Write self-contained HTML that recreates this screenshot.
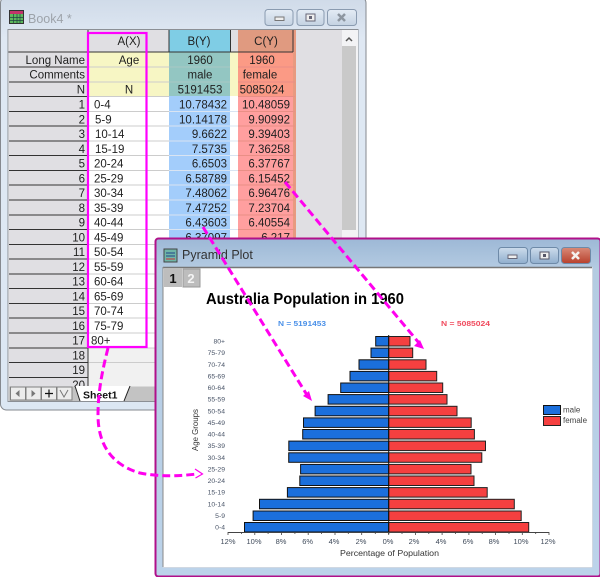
<!DOCTYPE html>
<html><head><meta charset="utf-8">
<style>
html,body{margin:0;padding:0;background:#fff;width:600px;height:577px;overflow:hidden}
svg{display:block;font-family:"Liberation Sans",sans-serif;filter:blur(.35px)}
.t{font-size:11.5px;fill:#1f1f1f}
.r{text-anchor:end}
.m{text-anchor:middle}
.a{font-size:6.8px;fill:#4a5568;text-anchor:end}
.x{font-size:7.5px;fill:#3f4a5a;text-anchor:middle}
.mb{fill:#1b6fdc;stroke:#111;stroke-width:1}
.fb{fill:#f54040;stroke:#222;stroke-width:1}
.rl{stroke:#333;stroke-width:1}
.dl{stroke:#ccc;stroke-width:1}
</style></head><body>
<svg width="600" height="577" viewBox="0 0 600 577" xmlns="http://www.w3.org/2000/svg">
<defs>
<linearGradient id="c1" x1="0" y1="0" x2="0" y2="1"><stop offset="0" stop-color="#cfdae8"/><stop offset=".1" stop-color="#dfe8f3"/><stop offset="1" stop-color="#dce7f3"/></linearGradient>
<linearGradient id="c2" x1="0" y1="0" x2="0" y2="1"><stop offset="0" stop-color="#9db8d6"/><stop offset=".09" stop-color="#b4cbe2"/><stop offset="1" stop-color="#bcd3ea"/></linearGradient>
<linearGradient id="b1" x1="0" y1="0" x2="0" y2="1"><stop offset="0" stop-color="#e4ecf5"/><stop offset="1" stop-color="#c4d2e2"/></linearGradient>
<linearGradient id="b2" x1="0" y1="0" x2="0" y2="1"><stop offset="0" stop-color="#cddcec"/><stop offset="1" stop-color="#90aecd"/></linearGradient>
<linearGradient id="b3" x1="0" y1="0" x2="0" y2="1"><stop offset="0" stop-color="#d98a78"/><stop offset="1" stop-color="#b8402c"/></linearGradient>
</defs>

<!-- Book window -->
<rect x=".5" y="-3" width="365.500" height="413" rx="6" fill="url(#c1)" stroke="#85898f"/>
<rect x="8" y="29.500" width="350" height="372" fill="#fff" stroke="#8b8f95"/>
<g fill="#e0dfe3"><rect x="9" y="30" width="79" height="357"/><rect x="88" y="30" width="81" height="22"/><rect x="230" y="30" width="8" height="22"/><rect x="295" y="30" width="47" height="357"/></g>
<rect x="88" y="52" width="81" height="44" fill="#f7f6c4"/>
<rect x="230" y="52" width="8" height="44" fill="#f7f6c4"/>
<rect x="169" y="30" width="61" height="22" fill="#7fcde5"/>
<rect x="169" y="52" width="61" height="44" fill="#93c6c2"/>
<rect x="169" y="96" width="61" height="146" fill="#a3cdfb"/>
<rect x="238" y="30" width="55" height="22" fill="#e09a80"/>
<rect x="238" y="52" width="55" height="44" fill="#fb9a85"/>
<rect x="238" y="96" width="55" height="146" fill="#ff9f9f"/>
<rect x="293" y="30" width="3" height="212" fill="#e89a80"/>
<rect x="88" y="348" width="70" height="39" fill="#f1f1f1"/>
<!-- grid lines -->
<g class="dl">
<path d="M88 67H169M88 82H169M88 96.500H169M88 111.500H169M88 126H169M88 141H169M88 155.500H169M88 170.500H169M88 185H169M88 200H169M88 215H169M88 229.500H169M88 244.500H160M88 259H160M88 274H160M88 288.500H160M88 303.500H160M88 318H160M88 333H160M88 348H160M88 362.500H160"/>
<path stroke="#d9e4f2" d="M169 111.500H238M169 126H238M169 141H238M169 155.500H238M169 170.500H238M169 185H238M169 200H238M169 215H238M169 229.500H238"/>
<path stroke="#a9c8c4" d="M169 67H230M169 82H230"/>
<path stroke="#e98f86" d="M238 67H295M238 82H295M238 96.500H295M238 111.500H295M238 126H295M238 141H295M238 155.500H295M238 170.500H295M238 185H295M238 200H295M238 215H295M238 229.500H295"/>
</g>
<path d="M88 30V386M169 30V52M230.500 30V52M293 30V52M8.500 52H293" stroke="#333" fill="none"/>
<g class="rl"><path d="M9 67H88M9 82H88M9 96.500H88M9 111.500H88M9 126H88M9 141H88M9 155.500H88M9 170.500H88M9 185H88M9 200H88M9 215H88M9 229.500H88M9 244.500H88M9 259H88M9 274H88M9 288.500H88M9 303.500H88M9 318H88M9 333H88M9 348H88M9 362.500H88M9 377.500H88" /></g>

<!-- Sheet texts -->
<g class="t m"><text x="129" y="45">A(X)</text><text x="129" y="64">Age</text><text x="129" y="93.500">N</text>
<text x="199" y="45">B(Y)</text><text x="266" y="45">C(Y)</text>
<text x="200" y="64">1960</text><text x="262" y="64">1960</text>
<text x="200" y="78.500">male</text><text x="260" y="78.500">female</text>
<text x="200" y="93.500">5191453</text><text x="262" y="93.500">5085024</text></g>
<g class="t r">
<text x="85" y="64">Long Name</text><text x="85" y="78.500">Comments</text><text x="85" y="93.500">N</text>
<text x="85" y="108.500">1</text><text x="85" y="123.300">2</text><text x="85" y="138">3</text><text x="85" y="152.800">4</text><text x="85" y="167.500">5</text><text x="85" y="182.300">6</text><text x="85" y="197">7</text><text x="85" y="211.800">8</text><text x="85" y="226.600">9</text><text x="85" y="241.300">10</text><text x="85" y="256.100">11</text><text x="85" y="270.900">12</text><text x="85" y="285.600">13</text><text x="85" y="300.400">14</text><text x="85" y="315.100">15</text><text x="85" y="329.900">16</text><text x="85" y="344.700">17</text><text x="85" y="359.400">18</text><text x="85" y="374.200">19</text><text x="85" y="389">20</text>
<text x="227" y="108.500">10.78432</text><text x="227" y="123.300">10.14178</text><text x="227" y="138">9.6622</text><text x="227" y="152.800">7.5735</text><text x="227" y="167.500">6.6503</text><text x="227" y="182.300">6.58789</text><text x="227" y="197">7.48062</text><text x="227" y="211.800">7.47252</text><text x="227" y="226.600">6.43603</text><text x="227" y="241.300">6.37097</text>
<text x="290" y="108.500">10.48059</text><text x="290" y="123.300">9.90992</text><text x="290" y="138">9.39403</text><text x="290" y="152.800">7.36258</text><text x="290" y="167.500">6.37767</text><text x="290" y="182.300">6.15452</text><text x="290" y="197">6.96476</text><text x="290" y="211.800">7.23704</text><text x="290" y="226.600">6.40554</text><text x="290" y="241.300">6.217</text>
</g>
<g class="t">
<text x="94" y="108.500">0-4</text><text x="95" y="123.300">5-9</text><text x="95" y="138">10-14</text><text x="95" y="152.800">15-19</text><text x="94" y="167.500">20-24</text><text x="94" y="182.300">25-29</text><text x="94" y="197">30-34</text><text x="94" y="211.800">35-39</text><text x="94" y="226.600">40-44</text><text x="94" y="241.300">45-49</text><text x="94" y="256.100">50-54</text><text x="94" y="270.900">55-59</text><text x="94" y="285.600">60-64</text><text x="94" y="300.400">65-69</text><text x="94" y="315.100">70-74</text><text x="94" y="329.900">75-79</text><text x="91" y="344.700">80+</text>
</g>

<!-- Scrollbar -->
<rect x="342" y="30" width="16" height="215" fill="#f3f3f5"/>
<rect x="342" y="46" width="14" height="184" fill="#c9c9c9"/>
<path d="M346 41l3-3 3 3" fill="none" stroke="#555" stroke-width="1.500"/>

<!-- Tab bar -->
<rect x="9" y="386.500" width="149" height="14.500" fill="#c3c3c3"/>
<g fill="#ececec" stroke="#808080"><rect x="10.500" y="387" width="15" height="13"/><rect x="26" y="387" width="15" height="13"/><rect x="41.500" y="387" width="15" height="13"/><rect x="57" y="387" width="15" height="13"/></g>
<path d="M19.500 390l-4 3.500 4 3.500zM31.500 390l4 3.500-4 3.500z" fill="#777"/>
<path d="M45 393.500h8M49 389.500v8" stroke="#111" stroke-width="1.200"/>
<path d="M60 390l4 7 4-7" stroke="#777" fill="none"/>
<path d="M75 386l5 15h44l6-15z" fill="#fff"/>
<path d="M75 386l5 15M130 386l-6 15" stroke="#222" fill="none"/>
<text x="83" y="398.500" font-size="10.500" font-weight="bold" fill="#111">Sheet1</text>

<!-- Book title bar -->
<rect x="9.500" y="10.500" width="14" height="13" fill="#5cb85c" stroke="#333"/>
<rect x="10" y="11" width="13" height="3" fill="#c2336a"/>
<path d="M10 17.500H23M10 20.500H23M13.500 14V23M17 14V23M20 14V23" stroke="#244" stroke-width=".7"/>
<text x="28" y="23" font-size="12.500" fill="#9da3aa">Book4 *</text>
<g stroke="#8a9bb0"><rect x="265" y="9.500" width="28" height="16" rx="3" fill="url(#b1)"/><rect x="297" y="9.500" width="27" height="16" rx="3" fill="url(#b1)"/><rect x="327.500" y="9.500" width="29" height="16" rx="3" fill="url(#b1)"/></g>
<rect x="275" y="17" width="9" height="3.500" fill="#eee" stroke="#777"/>
<rect x="306" y="14" width="9" height="7" fill="#eee" stroke="#667"/><rect x="309" y="16" width="3" height="3" fill="#667"/>
<path d="M338 14l7 7M345 14l-7 7" stroke="#8d96a0" stroke-width="2.500"/>

<!-- Plot window -->
<rect x="155.500" y="238.500" width="445" height="338" rx="3" fill="url(#c2)" stroke="#b0108a" stroke-width="2"/>
<rect x="163" y="267" width="430" height="300" fill="#fff"/>
<path d="M163 267.500H592" stroke="#777" stroke-width="1.500"/>
<path d="M163 267V567" stroke="#888" stroke-width="1"/>
<path d="M163 567.500H592M592.500 267V567" stroke="#d0d8e2" stroke-width="1"/>
<rect x="164" y="249" width="13" height="13" fill="#6fb5a8" stroke="#444"/>
<path d="M166 253h9M166 256h9" stroke="#224488"/><path d="M166 259h9" stroke="#c33"/>
<text x="182" y="259" font-size="12.500" fill="#333">Pyramid Plot</text>
<g stroke="#6e8aa8"><rect x="498.500" y="247.500" width="29" height="16" rx="3" fill="url(#b2)"/><rect x="530.500" y="247.500" width="28" height="16" rx="3" fill="url(#b2)"/><rect x="561.500" y="247.500" width="29" height="16" rx="3" fill="url(#b3)"/></g>
<rect x="508" y="255" width="9" height="3.500" fill="#eee" stroke="#667"/>
<rect x="540" y="252" width="9" height="7" fill="#eee" stroke="#556"/><rect x="543" y="254" width="3" height="3" fill="#556"/>
<path d="M572 252l7 7M579 252l-7 7" stroke="#f4f0ee" stroke-width="2.500"/>

<!-- Page tabs -->
<rect x="164" y="268" width="18" height="19" fill="#bdbdbd"/>
<rect x="183" y="269" width="17" height="18" fill="#bdbdbd" stroke="#999"/>
<text x="173" y="283" font-size="13" font-weight="bold" fill="#111" text-anchor="middle">1</text>
<text x="191" y="283" font-size="13" font-weight="bold" fill="#f4f4f4" text-anchor="middle">2</text>

<!-- Chart titles -->
<text x="206" y="304" font-size="16" font-weight="bold" fill="#000" textLength="198" lengthAdjust="spacingAndGlyphs">Australia Population in 1960</text>
<text x="278" y="326" font-size="7.500" font-weight="bold" fill="#4a90e8" textLength="48" lengthAdjust="spacingAndGlyphs">N = 5191453</text>
<text x="441" y="326" font-size="7.500" font-weight="bold" fill="#f04b5e" textLength="49" lengthAdjust="spacingAndGlyphs">N = 5085024</text>

<!-- Male bars -->
<g class="mb">
<rect x="244.500" y="522.500" width="144.200" height="9.500"/><rect x="253.100" y="511" width="135.600" height="9.500"/><rect x="259.500" y="499.300" width="129.200" height="9.500"/><rect x="287.400" y="487.600" width="101.300" height="9.500"/><rect x="299.800" y="476" width="88.900" height="9.500"/><rect x="300.600" y="464.400" width="88.100" height="9.500"/><rect x="288.700" y="452.800" width="100" height="9.500"/><rect x="288.800" y="441.100" width="99.900" height="9.500"/><rect x="302.700" y="429.500" width="86" height="9.500"/><rect x="303.500" y="417.900" width="85.200" height="9.500"/><rect x="315.100" y="406.300" width="73.600" height="9.500"/><rect x="328.100" y="394.600" width="60.600" height="9.500"/><rect x="340.700" y="383" width="48" height="9.500"/><rect x="350" y="371.400" width="38.700" height="9.500"/><rect x="359" y="359.800" width="29.700" height="9.500"/><rect x="371" y="348.100" width="17.700" height="9.500"/><rect x="375.700" y="336.500" width="13" height="9.500"/>
</g>
<!-- Female bars -->
<g class="fb">
<rect x="388.700" y="522.500" width="140" height="9.500"/><rect x="388.700" y="511" width="132.500" height="9.500"/><rect x="388.700" y="499.300" width="125.600" height="9.500"/><rect x="388.700" y="487.600" width="98.500" height="9.500"/><rect x="388.700" y="476" width="85.300" height="9.500"/><rect x="388.700" y="464.400" width="82.300" height="9.500"/><rect x="388.700" y="452.800" width="93.100" height="9.500"/><rect x="388.700" y="441.100" width="96.800" height="9.500"/><rect x="388.700" y="429.500" width="85.700" height="9.500"/><rect x="388.700" y="417.900" width="82.500" height="9.500"/><rect x="388.700" y="406.300" width="68.300" height="9.500"/><rect x="388.700" y="394.600" width="58.300" height="9.500"/><rect x="388.700" y="383" width="54" height="9.500"/><rect x="388.700" y="371.400" width="48" height="9.500"/><rect x="388.700" y="359.800" width="37.300" height="9.500"/><rect x="388.700" y="348.100" width="24" height="9.500"/><rect x="388.700" y="336.500" width="21.300" height="9.500"/>
</g>
<path d="M388.700 335V534" stroke="#111" stroke-width="1"/>
<path d="M228 532.500H549" stroke="#444" stroke-width="1"/>
<path d="M228 532v3M241.400 532v2M254.800 532v3M268.100 532v2M281.500 532v3M294.900 532v2M308.200 532v3M321.600 532v2M335 532v3M348.300 532v2M361.700 532v3M375.300 532v2M388.700 532v3M402 532v2M415.400 532v3M428.800 532v2M442.100 532v3M455.500 532v2M468.900 532v3M482.200 532v2M495.600 532v3M509 532v2M522.300 532v3M535.700 532v2M549 532v3" stroke="#444" stroke-width=".8"/>

<!-- Axis labels -->
<g class="a"><text x="225" y="529.500">0-4</text><text x="225" y="518">5-9</text><text x="225" y="506.300">10-14</text><text x="225" y="494.700">15-19</text><text x="225" y="483">20-24</text><text x="225" y="471.400">25-29</text><text x="225" y="459.800">30-34</text><text x="225" y="448.100">35-39</text><text x="225" y="436.500">40-44</text><text x="225" y="424.900">45-49</text><text x="225" y="413.300">50-54</text><text x="225" y="401.600">55-59</text><text x="225" y="390">60-64</text><text x="225" y="378.400">65-69</text><text x="225" y="366.800">70-74</text><text x="225" y="355.100">75-79</text><text x="225" y="343.500">80+</text></g>
<g class="x"><text x="228" y="544">12%</text><text x="254" y="544">10%</text><text x="281" y="544">8%</text><text x="307.700" y="544">6%</text><text x="334" y="544">4%</text><text x="361" y="544">2%</text><text x="388" y="544">0%</text><text x="414" y="544">2%</text><text x="441" y="544">4%</text><text x="468" y="544">6%</text><text x="494" y="544">8%</text><text x="521" y="544">10%</text><text x="548" y="544">12%</text></g>
<text x="340" y="556" font-size="8.500" fill="#333" textLength="99" lengthAdjust="spacingAndGlyphs">Percentage of Population</text>
<text transform="translate(198 430) rotate(-90)" font-size="8.500" fill="#333" text-anchor="middle" textLength="42" lengthAdjust="spacingAndGlyphs">Age Groups</text>

<!-- Legend -->
<rect x="543.500" y="405.500" width="17" height="9" class="mb"/>
<rect x="543.500" y="416.500" width="17" height="9" class="fb"/>
<text x="563" y="412.500" font-size="8" fill="#444">male</text>
<text x="563" y="423" font-size="8" fill="#444">female</text>

<!-- Magenta overlays -->
<rect x="88" y="33" width="58.500" height="314" fill="none" stroke="#ff00ff" stroke-width="2.200"/>
<g fill="none" stroke="#ff00ee" stroke-width="3" stroke-dasharray="8 4">
<path d="M285 182L419 343"/>
<path d="M203 227L307 395"/>
<path d="M108 348C103 368 98 390 98 415C98 445 112 465 140 473C160 477 180 476 197 474"/>
</g>
<path d="M424 349l-10-3 6-6z" fill="#ff00ee"/>
<path d="M312 401l-9-5 6-5z" fill="#ff00ee"/>
<path d="M195 469l7.500 5-7 4" fill="none" stroke="#ff00ee" stroke-width="1.200"/>
</svg>
</body></html>
